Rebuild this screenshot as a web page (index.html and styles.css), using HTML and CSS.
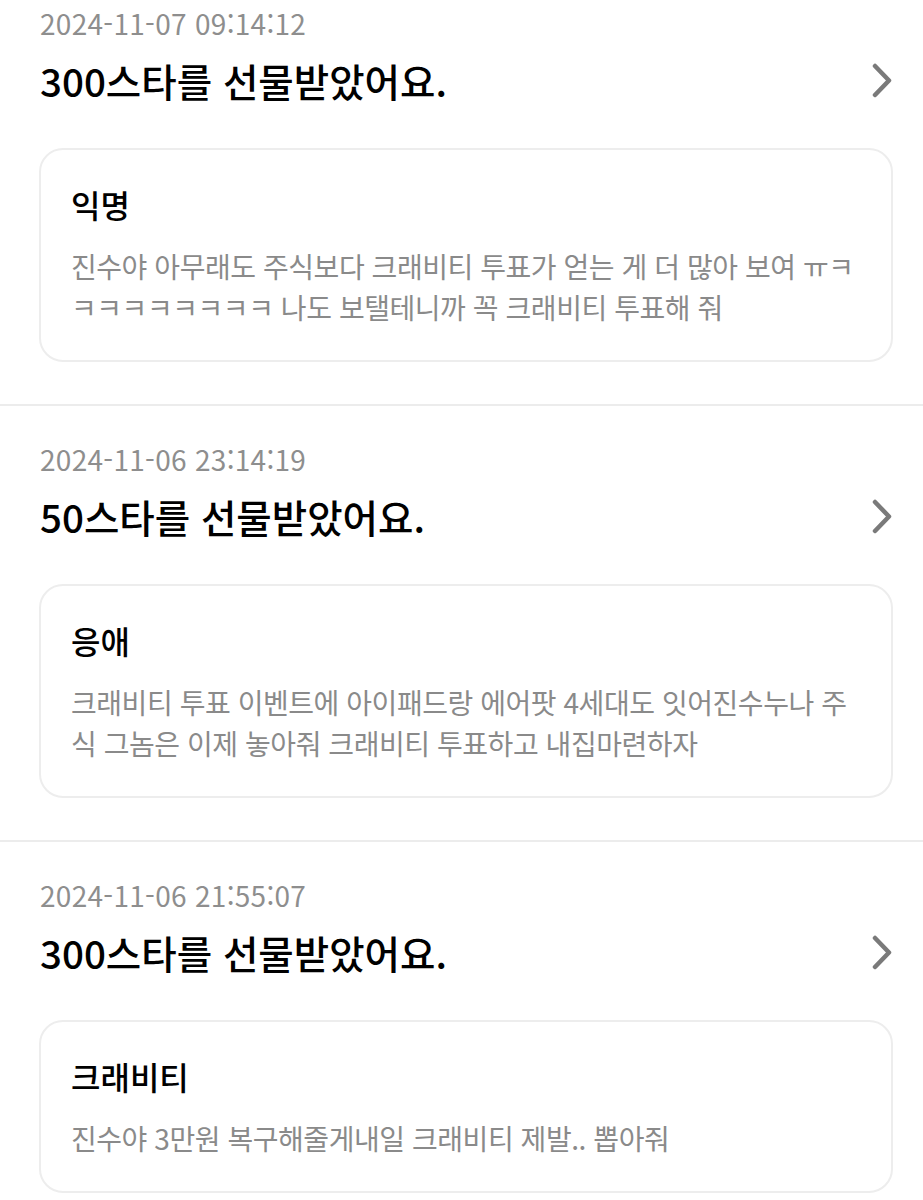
FILE: index.html
```html
<!DOCTYPE html>
<html lang="ko">

<head>
    <meta charset="utf-8">
    <link rel="stylesheet" href="styles.css">
</head>

<body>
    <div class="feed">
        <div class="gift">
            <div class="gift-date">2024-11-07 09:14:12</div>
            <div class="gift-head">
                <span class="gift-title">300스타를 선물받았어요.</span>
                <svg class="chevron" width="20" height="35" viewBox="0 0 20 35">
                    <path d="M3 3 L17 17.5 L3 32" />
                </svg>
            </div>
            <div class="card">
                <div class="card-name">익명</div>
                <p class="card-text">진수야 아무래도 주식보다 크래비티 투표가 얻는 게 더 많아 보여 ㅠㅋㅋㅋㅋㅋㅋㅋㅋㅋ 나도 보탤테니까 꼭 크래비티 투표해 줘</p>
            </div>
        </div>

        <div class="gift">
            <div class="gift-date">2024-11-06 23:14:19</div>
            <div class="gift-head">
                <span class="gift-title">50스타를 선물받았어요.</span>
                <svg class="chevron" width="20" height="35" viewBox="0 0 20 35">
                    <path d="M3 3 L17 17.5 L3 32" />
                </svg>
            </div>
            <div class="card">
                <div class="card-name">응애</div>
                <p class="card-text">크래비티 투표 이벤트에 아이패드랑 에어팟 4세대도 잇어진수누나 주식 그놈은 이제 놓아줘 크래비티 투표하고 내집마련하자</p>
            </div>
        </div>

        <div class="gift">
            <div class="gift-date">2024-11-06 21:55:07</div>
            <div class="gift-head">
                <span class="gift-title">300스타를 선물받았어요.</span>
                <svg class="chevron" width="20" height="35" viewBox="0 0 20 35">
                    <path d="M3 3 L17 17.5 L3 32" />
                </svg>
            </div>
            <div class="card">
                <div class="card-name">크래비티</div>
                <p class="card-text">진수야 3만원 복구해줄게내일 크래비티 제발.. 뽑아줘</p>
            </div>
        </div>
    </div>
</body>

</html>
```

FILE: styles.css
```css
body {
    font-family: "Noto Sans CJK KR", "Noto Sans", sans-serif;
    background-color: #FFFFFF;
    color: #000000;
    margin: 0;
    padding: 0;
}

/* list is scrolled a little, first date sits near the top */
.feed {
    margin-top: -30px;
}

.gift {
    padding: 35px 30px 42px 39px;
    border-bottom: 2px solid #ECECEC;
}

.gift-date {
    font-size: 28px;
    line-height: 36px;
    letter-spacing: 0.3px;
    color: #8E8E8E;
    padding-left: 1px;
}

.gift-head {
    display: flex;
    justify-content: space-between;
    align-items: center;
    margin-top: 15px;
}

.gift-title {
    font-size: 38.5px;
    line-height: 48px;
    font-weight: 500;
    padding-left: 1px;
}

.chevron {
    margin-right: 1px;
}

.chevron path {
    fill: none;
    stroke: #7A7A7A;
    stroke-width: 4.5;
    stroke-linecap: round;
    stroke-linejoin: round;
}

.card {
    margin-top: 44px;
    padding: 34px 30px 32px 30px;
    border: 2px solid #EDEDED;
    border-radius: 24px;
}

.card-name {
    font-size: 32px;
    line-height: 40px;
    font-weight: 500;
}

.card-text {
    margin: 22px 0 0 0;
    font-size: 28px;
    line-height: 41px;
    letter-spacing: -0.45px;
    color: #8A8A8A;
}
```
